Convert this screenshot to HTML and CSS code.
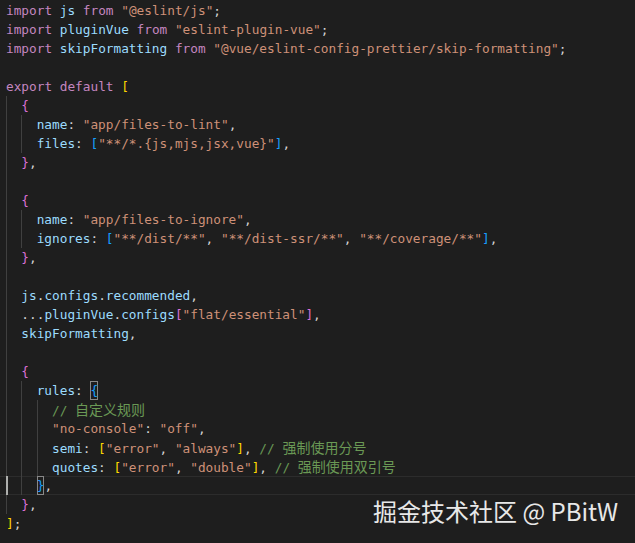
FILE: index.html
```html
<!DOCTYPE html>
<html lang="en">
<head>
<meta charset="utf-8">
<title>eslint.config.js</title>
<link rel="stylesheet" href="styles.css">
</head>
<body>
<div class="editor">
<div class="ln"><span class="k">import</span> <span class="v">js</span> <span class="k">from</span> <span class="s">"@eslint/js"</span>;</div>
<div class="ln"><span class="k">import</span> <span class="v">pluginVue</span> <span class="k">from</span> <span class="s">"eslint-plugin-vue"</span>;</div>
<div class="ln"><span class="k">import</span> <span class="v">skipFormatting</span> <span class="k">from</span> <span class="s">"@vue/eslint-config-prettier/skip-formatting"</span>;</div>
<div class="ln"></div>
<div class="ln"><span class="k">export</span> <span class="k">default</span> <span class="b1">[</span></div>
<div class="ln"><span class="ig"></span><span class="b2">{</span></div>
<div class="ln"><span class="ig"></span><span class="ig"></span><span class="v">name</span>: <span class="s">"app/files-to-lint"</span>,</div>
<div class="ln"><span class="ig"></span><span class="ig"></span><span class="v">files</span>: <span class="b3">[</span><span class="s">"**/*.{js,mjs,jsx,vue}"</span><span class="b3">]</span>,</div>
<div class="ln"><span class="ig"></span><span class="b2">}</span>,</div>
<div class="ln"><span class="ig"></span></div>
<div class="ln"><span class="ig"></span><span class="b2">{</span></div>
<div class="ln"><span class="ig"></span><span class="ig"></span><span class="v">name</span>: <span class="s">"app/files-to-ignore"</span>,</div>
<div class="ln"><span class="ig"></span><span class="ig"></span><span class="v">ignores</span>: <span class="b3">[</span><span class="s">"**/dist/**"</span>, <span class="s">"**/dist-ssr/**"</span>, <span class="s">"**/coverage/**"</span><span class="b3">]</span>,</div>
<div class="ln"><span class="ig"></span><span class="b2">}</span>,</div>
<div class="ln"><span class="ig"></span></div>
<div class="ln"><span class="ig"></span><span class="v">js</span>.<span class="v">configs</span>.<span class="v">recommended</span>,</div>
<div class="ln"><span class="ig"></span>...<span class="v">pluginVue</span>.<span class="v">configs</span><span class="b2">[</span><span class="s">"flat/essential"</span><span class="b2">]</span>,</div>
<div class="ln"><span class="ig"></span><span class="v">skipFormatting</span>,</div>
<div class="ln"><span class="ig"></span></div>
<div class="ln"><span class="ig"></span><span class="b2">{</span></div>
<div class="ln"><span class="ig"></span><span class="ig"></span><span class="v">rules</span>: <span class="b3 bm">{</span></div>
<div class="ln"><span class="ig"></span><span class="ig act"></span><span class="ig"></span><span class="c">// <span class="cjk">自定义规则</span></span></div>
<div class="ln"><span class="ig"></span><span class="ig act"></span><span class="ig"></span><span class="s">"no-console"</span>: <span class="s">"off"</span>,</div>
<div class="ln"><span class="ig"></span><span class="ig act"></span><span class="ig"></span><span class="v">semi</span>: <span class="b1">[</span><span class="s">"error"</span>, <span class="s">"always"</span><span class="b1">]</span>, <span class="c">// <span class="cjk">强制使用分号</span></span></div>
<div class="ln"><span class="ig"></span><span class="ig act"></span><span class="ig"></span><span class="v">quotes</span>: <span class="b1">[</span><span class="s">"error"</span>, <span class="s">"double"</span><span class="b1">]</span>, <span class="c">// <span class="cjk">强制使用双引号</span></span></div>
<div class="ln cur-line"><span class="ig cur"></span><span class="ig"></span><span class="b3 bm">}</span>,</div>
<div class="ln"><span class="ig"></span><span class="b2">}</span>,</div>
<div class="ln"><span class="b1">]</span>;</div>
</div>
<div class="watermark">掘金技术社区 @ PBitW</div>
</body>
</html>
```
FILE: styles.css
```css
html, body {
  margin: 0;
  padding: 0;
  background: #1e1e1e;
}

body {
  width: 635px;
  height: 543px;
  overflow: hidden;
  position: relative;
}

.editor {
  padding: 1px 0 0 0;
  font-family: "DejaVu Sans Mono", "Noto Sans CJK SC", monospace;
  font-size: 12.75px;
  color: #d4d4d4;
}

.ln {
  height: 19px;
  line-height: 19px;
  white-space: pre;
  padding-left: 6px;
}

.cur-line {
  box-shadow: inset 0 1px 0 #2c2c2c, inset 0 -1px 0 #2c2c2c;
}

.ig {
  display: inline-block;
  width: 2ch;
  height: 19px;
  vertical-align: top;
  box-shadow: inset 1px 0 0 #404040;
}

.ig.act {
  box-shadow: inset 1px 0 0 #404040;
}

.ig.cur {
  box-shadow: inset 2px 0 0 #aeafad;
}

.k { color: #c586c0; }
.v { color: #9cdcfe; }
.s { color: #ce9178; }
.c { color: #6a9955; }
.b1 { color: #ffd700; }
.b2 { color: #da70d6; }
.b3 { color: #179fff; }

.bm {
  display: inline-block;
  height: 19px;
  vertical-align: top;
  box-shadow: inset 0 0 0 1px #888888;
}

.cjk {
  font-family: "Noto Sans CJK SC", sans-serif;
  font-size: 14px;
}

.watermark {
  position: absolute;
  left: 373px;
  top: 499px;
  font-family: "Noto Sans CJK SC", "Noto Sans", sans-serif;
  font-size: 24px;
  line-height: 24px;
  color: #e8e8e8;
  white-space: nowrap;
}
```
